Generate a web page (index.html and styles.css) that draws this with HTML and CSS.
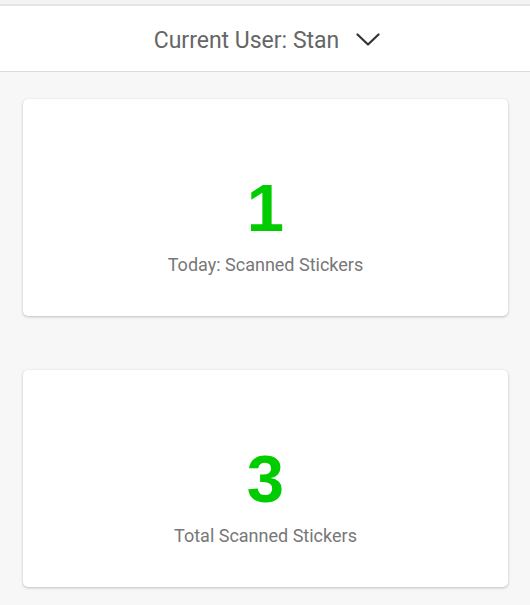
FILE: index.html
```html
<!DOCTYPE html>
<html>
<head>
<meta charset="utf-8">
<link rel="stylesheet" href="styles.css">
</head>
<body>
<div class="topstrip"></div>
<header class="header">
  <span class="user">Current User: Stan</span>
  <svg class="chevron" width="24" height="13" viewBox="0 0 24 13">
    <polyline points="1.5,1.5 12,11.5 22.5,1.5" fill="none" stroke="#333" stroke-width="2.2" stroke-linecap="round" stroke-linejoin="round"/>
  </svg>
</header>
<main class="content">
  <section class="card">
    <div class="count">1</div>
    <div class="label">Today: Scanned Stickers</div>
  </section>
  <section class="card">
    <div class="count">3</div>
    <div class="label">Total Scanned Stickers</div>
  </section>
</main>
</body>
</html>
```

FILE: styles.css
```css
html, body {
  margin: 0;
  padding: 0;
}
body {
  background: #f7f7f7;
  font-family: Roboto, "Noto Sans", sans-serif;
  width: 530px;
  height: 605px;
  overflow: hidden;
}
.topstrip {
  height: 4px;
  background: #f3f3f3;
  border-bottom: 2px solid #e4e4e4;
}
.header {
  height: 66px;
  background: #ffffff;
  border-bottom: 1px solid #dcdcdc;
  box-sizing: border-box;
  display: flex;
  align-items: center;
  justify-content: center;
  gap: 17px;
  padding-top: 4px;
  padding-left: 4px;
}
.user {
  font-size: 23px;
  color: #666666;
}
.chevron {
  display: block;
  margin-top: -3px;
}
.content {
  display: flex;
  flex-direction: column;
  gap: 54px;
  padding: 27px 22px 0 23px;
}
.card {
  height: 217px;
  background: #ffffff;
  border-radius: 5px;
  box-shadow: 0 1px 3px rgba(0, 0, 0, 0.22), 0 0 1px rgba(0, 0, 0, 0.08);
  display: flex;
  flex-direction: column;
  align-items: center;
  padding-top: 75px;
  box-sizing: border-box;
}
.count {
  font-family: "Liberation Sans", Arial, sans-serif;
  font-weight: bold;
  font-size: 67px;
  line-height: 68px;
  color: #00cc00;
}
.label {
  margin-top: 12px;
  font-size: 18px;
  line-height: 22px;
  color: #777777;
}
```
